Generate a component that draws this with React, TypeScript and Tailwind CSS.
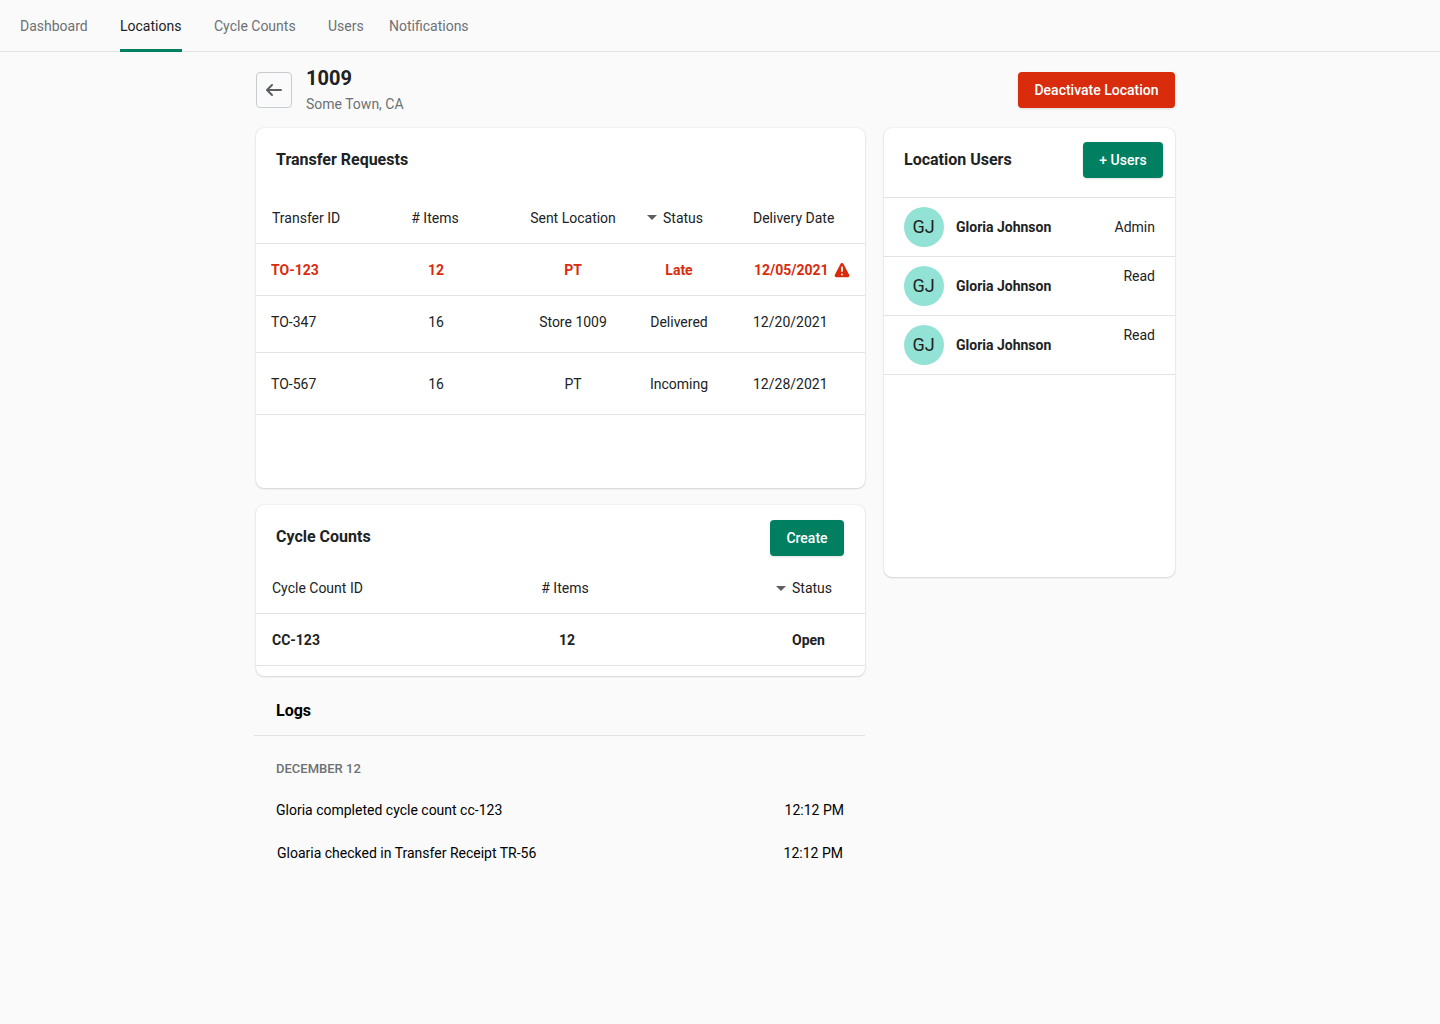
import React from 'react';

const tabs = ['Dashboard', 'Locations', 'Cycle Counts', 'Users', 'Notifications'];

const transfers = [
  { id: 'TO-347', items: '16', sent: 'Store 1009', status: 'Delivered', date: '12/20/2021', rowClass: 'h-[57px] pb-1' },
  { id: 'TO-567', items: '16', sent: 'PT', status: 'Incoming', date: '12/28/2021', rowClass: 'h-[62px]' },
];

const users = [
  { name: 'Gloria Johnson', role: 'Admin', roleClass: '' },
  { name: 'Gloria Johnson', role: 'Read', roleClass: 'mb-5' },
  { name: 'Gloria Johnson', role: 'Read', roleClass: 'mb-5' },
];

const SortCaret = () => <span className="w-0 h-0 border-x-[5px] border-x-transparent border-t-[5px] border-t-[#5c5f62]" />;

const GreenButton = ({ label, className }: { label: string; className: string }) => (
  <button className={`h-9 rounded-[4px] bg-[#008060] text-white text-sm font-medium shadow-sm ${className}`}>{label}</button>
);

const Card = ({ className, children }: { className: string; children: React.ReactNode }) => (
  <section className={`bg-white rounded-lg shadow-[0_0_2px_rgba(0,0,0,0.12),0_1px_2px_rgba(0,0,0,0.12)] ${className}`}>{children}</section>
);

export default function App() {
  return (
    <div className="min-h-screen bg-[#fafafa] text-[#202223] text-sm font-['Roboto',sans-serif]">
      {/* top nav */}
      <nav className="h-[52px] border-b border-[#e1e3e5] flex gap-8 pl-5">
        {tabs.map((t) => (
          <a
            key={t}
            className={`h-[52px] leading-[52px] border-b-[3px] whitespace-nowrap ${t === 'Locations' ? 'w-[62px] border-[#008060] text-[#202223]' : 'border-transparent text-[#6d7175]'} ${t === 'Dashboard' ? 'w-[68px]' : ''} ${t === 'Cycle Counts' ? 'w-[82px]' : ''} ${t === 'Users' ? 'w-9' : ''} ${t === 'Notifications' ? '-ml-[7px]' : ''}`}
          >
            {t}
          </a>
        ))}
      </nav>

      <main className="w-[919px] ml-[256px]">
        {/* page header */}
        <header className="flex items-start h-[76px] pt-[14px]">
          <button className="mt-[6px] w-9 h-9 rounded-[4px] border border-[#c9cccf] flex items-center justify-center">
            <svg width="20" height="20" viewBox="0 0 20 20" fill="#5c5f62">
              <path d="M17 9H5.414l3.293-3.293a.999.999 0 1 0-1.414-1.414l-5 5a.999.999 0 0 0 0 1.414l5 5a.997.997 0 0 0 1.414 0 .999.999 0 0 0 0-1.414L5.414 11H17a1 1 0 1 0 0-2z" />
            </svg>
          </button>
          <div className="ml-[14px]">
            <h1 className="text-xl leading-6 font-bold">1009</h1>
            <p className="mt-1 leading-5 text-[#6d7175]">Some Town, CA</p>
          </div>
          <button className="ml-auto mt-[6px] w-[157px] h-9 rounded-[4px] bg-[#d82c0d] text-white font-medium shadow-sm">Deactivate Location</button>
        </header>

        <div className="flex items-start gap-[19px]">
          <div className="w-[609px] shrink-0">
            {/* transfer requests */}
            <Card className="h-[360px]">
              <h2 className="pl-5 pt-[22px] text-base leading-5 font-bold">Transfer Requests</h2>
              <div className="mt-[22px] h-[52px] grid grid-cols-[100px_160px_114px_98px_137px] items-center border-b border-[#e1e3e5] text-[#202223]">
                <span className="pl-4 whitespace-nowrap">Transfer ID</span>
                <span className="text-center pr-[2px]"># Items</span>
                <span className="text-center whitespace-nowrap">Sent Location</span>
                <span className="flex items-center justify-center gap-[6px] pr-2">
                  <SortCaret />
                  Status
                </span>
                <span className="pl-[25px]">Delivery Date</span>
              </div>
              <div className="h-[52px] grid grid-cols-[100px_160px_114px_98px_137px] items-center border-b border-[#e1e3e5] text-[#d82c0d] font-bold">
                <span className="pl-[15px]">TO-123</span>
                <span className="text-center">12</span>
                <span className="text-center">PT</span>
                <span className="text-center">Late</span>
                <span className="pl-[26px] flex items-center gap-[4px]">
                  12/05/2021
                  <svg width="18" height="18" viewBox="0 0 20 20" fill="#d82c0d">
                    <path
                      fillRule="evenodd"
                      d="M17.928 15.156 11.58 3.135a1.79 1.79 0 0 0-3.16 0L2.072 15.156C1.439 16.356 2.309 18 3.652 18h12.696c1.343 0 2.213-1.644 1.58-2.844zM9 7a1 1 0 1 1 2 0v4a1 1 0 1 1-2 0V7zm1 9a1 1 0 1 1 0-2 1 1 0 0 1 0 2z"
                    />
                  </svg>
                </span>
              </div>
              {transfers.map((r) => (
                <div key={r.id} className={`${r.rowClass} grid grid-cols-[100px_160px_114px_98px_137px] items-center border-b border-[#e1e3e5]`}>
                  <span className="pl-[15px]">{r.id}</span>
                  <span className="text-center">{r.items}</span>
                  <span className="text-center">{r.sent}</span>
                  <span className="text-center">{r.status}</span>
                  <span className="pl-[25px]">{r.date}</span>
                </div>
              ))}
            </Card>

            {/* cycle counts */}
            <Card className="mt-[17px] h-[171px]">
              <div className="flex items-start h-[66px] pt-[15px] pl-5 pr-[21px]">
                <h2 className="mt-[7px] text-base leading-5 font-bold">Cycle Counts</h2>
                <GreenButton label="Create" className="ml-auto w-[74px]" />
              </div>
              <div className="h-[43px] pb-2 grid grid-cols-[210px_200px_199px] items-center border-b border-[#e1e3e5]">
                <span className="pl-4 whitespace-nowrap">Cycle Count ID</span>
                <span className="text-center -ml-[2px]"># Items</span>
                <span className="flex items-center gap-[6px] pl-[110px]">
                  <SortCaret />
                  Status
                </span>
              </div>
              <div className="h-[52px] grid grid-cols-[210px_200px_199px] items-center border-b border-[#e1e3e5] font-bold">
                <span className="pl-4">CC-123</span>
                <span className="text-center pl-[2px]">12</span>
                <span className="pl-[126px]">Open</span>
              </div>
            </Card>

            {/* logs */}
            <section className="mt-[25px]">
              <h2 className="pl-5 text-base leading-5 font-bold text-black">Logs</h2>
              <div className="-ml-[2px] mt-[14px] border-b border-[#e1e3e5]" />
              <p className="pl-5 mt-[23px] text-[13px] leading-5 font-medium text-[#6d7175]">DECEMBER 12</p>
              <div className="mt-[21px] flex justify-between pl-5 pr-[21px] leading-5 text-black">
                <span>Gloria completed cycle count cc-123</span>
                <span>12:12 PM</span>
              </div>
              <div className="mt-[23px] flex justify-between pl-[21px] pr-[22px] leading-5 text-black">
                <span>Gloaria checked in Transfer Receipt TR-56</span>
                <span>12:12 PM</span>
              </div>
            </section>
          </div>

          {/* location users */}
          <Card className="w-[291px] h-[449px]">
            <div className="h-[70px] pb-[6px] flex items-center pl-5 pr-3 border-b border-[#e1e3e5]">
              <h2 className="text-base font-bold">Location Users</h2>
              <GreenButton label="+ Users" className="ml-auto w-20" />
            </div>
            {users.map((u, i) => (
              <div key={i} className="h-[59px] flex items-center pl-5 pr-5 border-b border-[#e1e3e5]">
                <span className="w-10 h-10 rounded-full bg-[#92e3d5] flex items-center justify-center text-lg pr-px">GJ</span>
                <span className="ml-3 font-bold">{u.name}</span>
                <span className={`ml-auto text-[#202223] ${u.roleClass}`}>{u.role}</span>
              </div>
            ))}
          </Card>
        </div>
      </main>
    </div>
  );
}
